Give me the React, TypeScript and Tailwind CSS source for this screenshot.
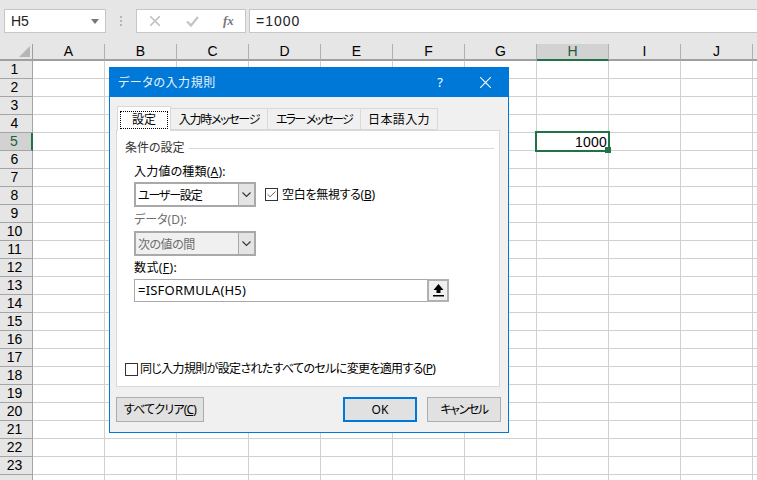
import { Check } from 'lucide-react';

const columns = ['A', 'B', 'C', 'D', 'E', 'F', 'G', 'H', 'I', 'J', ''];
const rows = Array.from({ length: 24 }, (_, i) => i + 1);
const jp = "font-['Noto_Sans','Noto_Sans_CJK_JP',sans-serif] [font-feature-settings:'palt']";

function Cross({ size, color, weight }: { size: number; color: string; weight: number }) {
  return (
    <svg width={size} height={size} viewBox="0 0 10 10" className="shrink-0">
      <path d="M0 0 L10 10 M10 0 L0 10" stroke={color} strokeWidth={weight} fill="none" />
    </svg>
  );
}

function Combo({ value, disabled, spacing }: { value: string; disabled?: boolean; spacing: string }) {
  return (
    <div className={`flex h-[25px] w-[122px] border-2 border-[#a9a9a9] ${disabled ? 'bg-[#f0f0f0] text-[#6d6d6d]' : 'bg-white text-black'}`}>
      <div className={`flex-1 pl-[2px] pt-px text-[12px] leading-[21px] ${spacing}`}>{value}</div>
      <div className="flex w-[16px] items-center justify-center border-l border-[#a9a9a9] bg-[#e4e4e4]">
        <svg width="9" height="5" viewBox="0 0 9 5">
          <path d="M0.5 0.5 L4.5 4.5 L8.5 0.5" stroke="#333" strokeWidth="1.1" fill="none" />
        </svg>
      </div>
    </div>
  );
}

function Tab({ label, active, width }: { label: string; active?: boolean; width: string }) {
  return (
    <div
      className={`flex items-center justify-center whitespace-nowrap border border-[#d9d9d9] text-[12px] ${width} ${
        active ? 'relative z-10 -mb-px h-[25px] border-b-0 bg-white' : 'mt-[2px] h-[22px] bg-[#f0f0f0] pt-px'
      }`}
    >
      {active ? <span className="mt-px border border-dotted border-black px-[11px] leading-[16px]">{label}</span> : label}
    </div>
  );
}

function CheckBox({ checked }: { checked?: boolean }) {
  return (
    <div className="flex h-[13px] w-[13px] shrink-0 items-center justify-center border border-[#333] bg-white">
      {checked && <Check size={11} strokeWidth={1.5} className="text-[#222]" />}
    </div>
  );
}

function Sheet() {
  return (
    <div className="flex w-[825px] flex-col font-['Liberation_Sans',sans-serif] text-[14px] text-black">
      <div className="flex h-[17px] bg-[#e6e6e6]">
        <div className="flex w-[33px] shrink-0 items-end justify-end border-b-2 border-r border-[#9f9f9f] pb-[2px] pr-[2px]">
          <svg width="11" height="11" viewBox="0 0 11 11"><path d="M0 11 L11 0 L11 11 Z" fill="#b5b5b5" /></svg>
        </div>
        {columns.map((c) => (
          <div
            key={c}
            className={`flex w-[72px] shrink-0 items-center justify-center border-r border-[#b0b0b0] ${
              c === 'H' ? 'border-b-2 border-b-[#217346] bg-[#d2d2d2] text-[#1c5e3a]' : 'border-b-2 border-b-[#9f9f9f]'
            }`}
          >
            {c}
          </div>
        ))}
      </div>
      {rows.map((r) => (
        <div key={r} className="flex h-[18px]">
          <div
            className={`flex w-[33px] shrink-0 items-center justify-center border-b border-r border-[#a5a5a5] pr-[3px] ${
              r === 5 ? 'border-r-2 border-r-[#217346] bg-[#d2d2d2] text-[#1c5e3a]' : 'bg-[#e6e6e6]'
            }`}
          >
            {r < 24 ? r : ''}
          </div>
          {columns.map((c) => (
            <div key={c} className="relative w-[72px] shrink-0 border-b border-r border-[#d0d0d0] bg-white">
              {r === 5 && c === 'H' && (
                <div className="absolute -left-[2px] -top-[2px] z-10 flex h-[21px] w-[75px] items-center justify-end border-2 border-[#217346] pr-px leading-none tracking-[0.2px]">
                  1000
                  <div className="absolute -bottom-[3px] -right-[3px] h-[6px] w-[6px] bg-[#217346]" />
                </div>
              )}
            </div>
          ))}
        </div>
      ))}
    </div>
  );
}

function Dialog() {
  return (
    <div className="absolute left-[109px] top-[67px] z-20 flex h-[366px] w-[400px] flex-col border border-[#0078d7] bg-[#f0f0f0] text-[12px] text-black">
      <div className="flex h-[29px] shrink-0 items-center bg-[#0078d7] pl-[8px] text-[12px] text-[#e8f2fb]">
        <span className="flex-1 tracking-[0.6px]">データの入力規則</span>
        <span className="mr-[37px] text-[13px] text-white">?</span>
        <div className="mr-[17px]">
          <Cross size={11} color="#ffffff" weight={1} />
        </div>
      </div>
      <div className="flex flex-1 flex-col px-[6px]">
        <div className="ml-px mt-[9px] flex">
          <Tab label="設定" active width="w-[54px]" />
          <Tab label="入力時メッセージ" width="w-[98px] -ml-px tracking-[-1.3px]" />
          <Tab label="エラー メッセージ" width="w-[94px] -ml-px tracking-[-1.7px]" />
          <Tab label="日本語入力" width="w-[78px] -ml-px tracking-[0.4px]" />
        </div>
        <div className="flex h-[257px] w-[384px] flex-col border border-[#d9d9d9] bg-white pl-[8px] pr-[5px]">
          <div className="mt-[8px] flex items-center gap-[4px] leading-[18px]">
            <span className="text-[#333]">条件の設定</span>
            <div className="h-px flex-1 bg-[#d9d9d9]" />
          </div>
          <div className="ml-[9px] mt-[6px] leading-[18px] tracking-[0.2px]">入力値の種類(<u>A</u>):</div>
          <div className="ml-[9px] mt-px flex items-center gap-[9px]">
            <Combo value="ユーザー設定" spacing="tracking-[-1.2px]" />
            <div className="flex items-center gap-[4px]">
              <CheckBox checked />
              <span className="tracking-[-0.3px]">空白を無視する(<u>B</u>)</span>
            </div>
          </div>
          <div className="ml-[9px] mt-[4px] leading-[18px] text-[#6d6d6d]">データ(D):</div>
          <div className="ml-[9px] mt-[2px]">
            <Combo value="次の値の間" disabled spacing="tracking-[-0.5px]" />
          </div>
          <div className="ml-[9px] mt-[3px] leading-[18px] tracking-[0.4px]">数式(<u>F</u>):</div>
          <div className="ml-[9px] mt-[2px] flex h-[23px] w-[315px] items-center justify-between border border-[#a9a9a9] bg-white pl-[3px]">
            <span className="text-[13px] tracking-[0.2px]">=ISFORMULA(H5)</span>
            <div className="-mr-px flex h-[23px] w-[22px] items-center justify-center border-2 border-[#b0b0b0] bg-[#f0f0f0]">
              <svg width="11" height="13" viewBox="0 0 11 13"><path d="M5.5 0 L10.5 6 L7.5 6 L7.5 9 L3.5 9 L3.5 6 L0.5 6 Z M0 11 H11 V12.5 H0 Z" fill="#000" /></svg>
            </div>
          </div>
          <div className="mt-[58px] flex items-center gap-[2px]">
            <CheckBox />
            <span className="tracking-[-0.65px]">同じ入力規則が設定されたすべてのセルに変更を適用する(<u>P</u>)</span>
          </div>
        </div>
        <div className="mt-[10px] flex">
          <div className="flex h-[25px] w-[88px] items-center justify-center border border-[#adadad] bg-[#e1e1e1] tracking-[-0.8px]">すべてクリア(<u>C</u>)</div>
          <div className="ml-[139px] flex h-[25px] w-[74px] items-center justify-center border-2 border-[#0078d7] bg-[#e1e1e1]">OK</div>
          <div className="ml-[10px] flex h-[25px] w-[74px] items-center justify-center border border-[#adadad] bg-[#e1e1e1] tracking-[-1.4px]">キャンセル</div>
        </div>
      </div>
    </div>
  );
}

export default function App() {
  return (
    <div className={`relative h-[480px] w-[757px] overflow-hidden bg-[#e6e6e6] ${jp}`}>
      <div className="flex h-[44px] items-start pt-[9px] font-['Liberation_Sans',sans-serif] text-[14px] text-[#222]">
        <div className="ml-[4px] flex h-[24px] w-[102px] items-center justify-between border border-[#c6c6c6] bg-white pl-[6px] pr-[6px]">
          <span>H5</span>
          <svg width="8" height="5" viewBox="0 0 8 5"><path d="M0 0 H8 L4 5 Z" fill="#777" /></svg>
        </div>
        <div className="mx-[14px] mt-[7px] flex w-[2px] flex-col gap-[2px]">
          <div className="h-[2px] bg-[#b5b5b5]" />
          <div className="h-[2px] bg-[#b5b5b5]" />
          <div className="h-[2px] bg-[#b5b5b5]" />
        </div>
        <div className="flex h-[24px] w-[110px] items-center border border-[#c6c6c6] bg-white">
          <div className="ml-[13px]">
            <Cross size={10} color="#c4c4c4" weight={1.6} />
          </div>
          <svg width="13" height="11" viewBox="0 0 13 11" className="ml-[26px]">
            <path d="M1 5.5 L5 9.5 L12 1" stroke="#c4c4c4" strokeWidth="2.2" fill="none" />
          </svg>
          <span className="ml-[24px] font-['Liberation_Serif',serif] text-[13px] font-bold italic text-[#777]">fx</span>
        </div>
        <div className="ml-[3px] flex h-[24px] flex-1 items-center border border-r-0 border-[#c6c6c6] bg-white pl-[6px] tracking-[1px]">=1000</div>
      </div>
      <Sheet />
      <Dialog />
    </div>
  );
}
